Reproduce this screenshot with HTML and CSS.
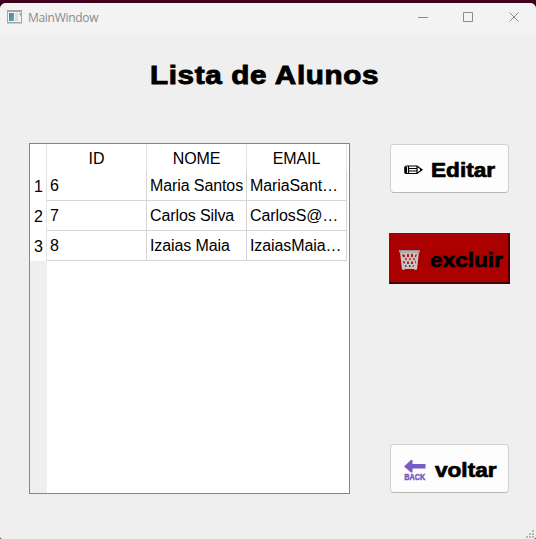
FILE: index.html
```html
<!DOCTYPE html>
<html lang="pt-BR">
<head>
<meta charset="utf-8">
<title>MainWindow</title>
<link rel="stylesheet" href="styles.css">
</head>
<body>
<div class="window">
  <header class="titlebar">
    <svg class="app-icon" width="16" height="14" viewBox="0 0 16 14"><defs><linearGradient id="pane" x2="1" y2="1"><stop stop-color="#5079ab"/><stop offset="1" stop-color="#63b394"/></linearGradient></defs><path fill="#f3f5f5" stroke="#a5a9ac" d="M.5.5h14v12H.5z"/><path fill="#a2a6aa" d="M0 0h15v2H0zM0 12h15v1.500H0z"/><path fill="url(#pane)" d="M2 3h5v8H2z"/><path fill="#dadddd" d="M8 3h3v8H8z"/><path fill="#83baae" d="M12 3h2v4z"/></svg>
    <span class="caption">MainWindow</span>
    <svg class="controls" width="104" height="12" viewBox="0 0 104 12" fill="none" stroke="#8b8b8b"><path d="M0 6.500h10M45.500 1.500h9v9h-9zM91.500 1.500l9 9M100.500 1.500l-9 9"/></svg>
  </header>
  <main class="content">
    <h1 class="title">Lista de Alunos</h1>
    <div class="body">
      <div class="table">
        <div class="corner"></div><div class="head">ID</div><div class="head">NOME</div><div class="head">EMAIL</div>
        <div class="num">1</div><div class="cell">6</div><div class="cell">Maria Santos</div><div class="cell">MariaSant…</div>
        <div class="num">2</div><div class="cell">7</div><div class="cell">Carlos Silva</div><div class="cell">CarlosS@…</div>
        <div class="num">3</div><div class="cell">8</div><div class="cell">Izaias Maia</div><div class="cell">IzaiasMaia…</div>
        <div class="gutter"></div>
      </div>
      <div class="actions">
        <button class="btn edit"><svg width="19" height="10" viewBox="0 0 19 10" fill="none" stroke="#000" stroke-width="1.200"><path d="M2.500 1H13l5 3.800L13 8.500H2.500Q.8 8.500.8 7V2.500Q.8 1 2.500 1zM4.500 1v7.500M5 3.500h8M5 6h8M13 1v7.500"/><path fill="#000" d="M1 2h2v6H1zM16 3.500l2.500 1.300L16 6.300z" stroke="none"/></svg><span>Editar</span></button>
        <button class="btn delete"><svg width="21" height="20" viewBox="0 0 21 20"><path fill="#c6c2c2" d="M1 2h19l-2 17.500-2 .5-1-1H6l-1 1-2-.5z"/><path fill="#929190" d="M0 0h21v2.500H0z"/><path fill="#b9b7b6" d="M2 1h17v1H2z"/><path fill="#ae1919" d="M3 4l3 1v2H4zM8 4h2v3H8zM12 4h2v3h-2zM16 5l2-1-1 3h-1zM6 8.500l1-1 1 1.500-1 1.500zM10 9l1-1.500L12 9l-1 1.500zM14 9l1-1.500 1 1.500-1 1.500zM4 11l2 .5v2H4.500zM8 11.500h2V14H8zM12 11.500h2V14h-2zM16 11l1-.5-.5 3H16zM6 15h1.500v2H6zM10 15h1.500v2H10zM14 15h1l-.5 2h-1z"/></svg><span>excluir</span></button>
        <button class="btn back"><svg width="22" height="21" viewBox="0 0 22 21"><path fill="#775bc7" d="M0 6.500L7 0h1.500v4H21.500v4.500H8.500V12.500H7z"/><text class="back-label" x="0.300" y="20.300" textLength="21" lengthAdjust="spacingAndGlyphs">BACK</text></svg><span>voltar</span></button>
      </div>
    </div>
  </main>
  <svg class="grip" width="9" height="9" viewBox="0 0 9 9" fill="#b7b7b7"><path d="M6 0h2v2H6zM3 3h2v2H3zM6 3h2v2H6zM0 6h2v2H0zM3 6h2v2H3zM6 6h2v2H6z"/></svg>
</div>
</body>
</html>
```
FILE: styles.css
```css
* { box-sizing: border-box; }
body {
  margin: 0;
  padding-top: 3px;
  height: 539px;
  overflow: hidden;
  background: #3d001f;
  font-family: "Liberation Sans", Arial, sans-serif;
  color: #000;
}
.window {
  position: relative;
  height: 536px;
  overflow: hidden;
  background: #efefef;
  border-radius: 6px 6px 2px 2px;
}
.titlebar {
  height: 30px;
  display: flex;
  align-items: center;
  padding: 0 14px 2px 7px;
  background: #f3f3f3;
}
.caption {
  margin-left: 5px;
  font: 12px "Open Sans", sans-serif;
  letter-spacing: -.3px;
  color: #8b8b8b;
}
.controls { margin-left: auto; }
.title {
  margin: 0 0 0 150px;
  width: 230px;
  padding-top: 27px;
  height: 110px;
  font-size: 26.500px;
  line-height: 31px;
  font-weight: 700;
  letter-spacing: .55px;
  white-space: nowrap;
  -webkit-text-stroke: .9px #000;
  transform: scaleX(1.120);
  transform-origin: left;
}
.body {
  display: flex;
  gap: 39px;
  padding-left: 29px;
}
.table {
  width: 321px;
  height: 351px;
  display: grid;
  grid-template-columns: 17px repeat(3, 100px);
  grid-template-rows: 27px repeat(3, 30px) 1fr;
  border: 1px solid #83848d;
  background: #fff;
  font-size: 16px;
  letter-spacing: -.1px;
}
.corner, .head { border-right: 1px solid #e3e3e3; }
.head { text-align: center; line-height: 30px; }
.num {
  border-right: 1px solid #e3e3e3;
  padding-left: 1px;
  text-align: center;
  line-height: 32px;
}
.cell {
  border-right: 1px solid #d5d5d5;
  border-bottom: 1px solid #d5d5d5;
  padding-left: 3px;
  line-height: 30px;
  white-space: nowrap;
}
.gutter { background: #efefef; }
.actions { display: flex; flex-direction: column; }
.btn {
  width: 119px;
  height: 49px;
  margin: 1px 1px 0;
  display: flex;
  align-items: center;
  padding: 3px 0 0 13px;
  border: 1px solid #d0d0d0;
  border-bottom-color: #b8b8b8;
  border-radius: 4px;
  background: #fdfdfd;
  color: #000;
  font: 700 20px/24px "Liberation Sans", Arial, sans-serif;
  -webkit-text-stroke: .7px #000;
}
.btn svg { flex: none; overflow: visible; -webkit-text-stroke: 0; }
.btn span { transform: scaleX(1.130); transform-origin: left; }
.edit { gap: 8px; }
.delete {
  width: 121px;
  height: 51px;
  margin: 40px 0 159px;
  padding-left: 9px;
  gap: 10px;
  border: 1px solid #a50000;
  border-right: 2px solid #500000;
  border-bottom: 2px solid #400000;
  border-radius: 0;
  background: #aa0000;
}
.back { gap: 9px; }
.back-label {
  font: 700 9px "Liberation Sans", Arial, sans-serif;
  fill: #775bc7;
  stroke: #775bc7;
  stroke-width: .5px;
}
.grip { position: absolute; right: 1px; bottom: 0; }
```
